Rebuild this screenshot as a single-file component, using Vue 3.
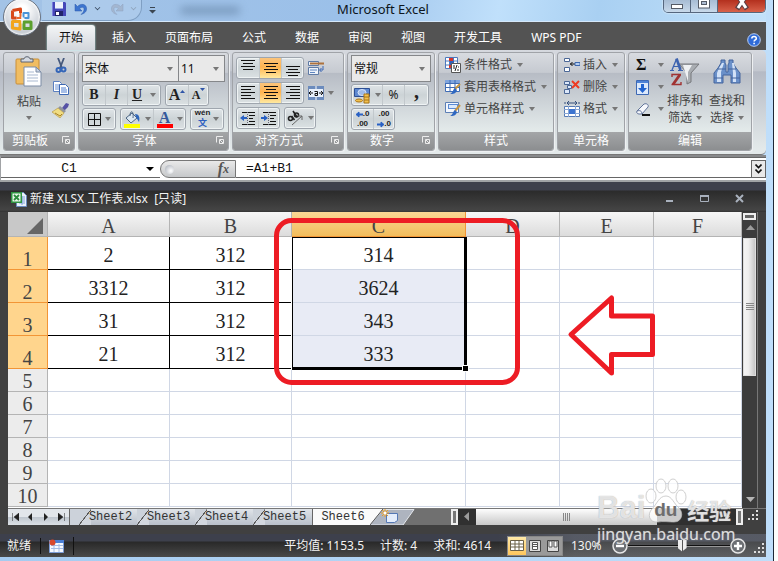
<script setup>
import { ref } from 'vue'

const tabs = ['开始', '插入', '页面布局', '公式', '数据', '审阅', '视图', '开发工具', 'WPS PDF']
const columns = ['A', 'B', 'C', 'D', 'E', 'F']
const rows = [
  ['2', '312', '314'],
  ['3312', '312', '3624'],
  ['31', '312', '343'],
  ['21', '312', '333'],
  [], [], [], [], [], []
]
const sheets = ['Sheet2', 'Sheet3', 'Sheet4', 'Sheet5', 'Sheet6']
const activeSheet = ref('Sheet6')
const zoom = ref(130)
const formula = ref('=A1+B1')
const cellName = ref('C1')
const valign = [[3, 6, 9, 12], [6, 9, 12, 15], [9, 12, 15, 18]]
const halign = ['left', 'center', 'right']
const shortLineX = { left: 1, center: 3, right: 5 }
</script>

<template>
  <div class="desk">
    <div class="window">
      <header class="titlebar">
        <div class="quick">
          <button class="bare" aria-label="保存">
            <svg width="14" height="15" viewBox="0 0 14 15"><path d="M0 1h13l1 1v13H0z" fill="#4547b8" /><path d="M3 1h8v6H3z" fill="#eef2fb" /><path d="M3 7h8v1H3z" fill="#9aa6e0" /><path d="M3 10h8v5H3z" fill="#22256b" /><path d="M4 11h3v3H4z" fill="#fff" /><path d="M0 1h1v14H0z" fill="#7a7ddd" /></svg>
          </button>
          <button class="bare" aria-label="撤消">
            <svg width="14" height="14" viewBox="0 0 14 14"><path d="M1 2v7h7L5.600 6.600C8 4.500 10.500 5 10 8c-.3 2-1.500 3-3 4.500 4-1 6-3.500 5.500-6.500C12 2 7 1 3.500 4.500z" fill="#3c74cf" stroke="#2c5aa8" stroke-width=".5" /></svg>
          </button>
          <i class="chev"></i>
          <button class="bare" aria-label="恢复">
            <svg width="14" height="14" viewBox="0 0 14 14"><path d="M13 2v7H6l2.400-2.400C6 4.500 3.500 5 4 8c.3 2 1.500 3 3 4.500C3 11.500 1 9 1.500 6 2 2 7 1 10.500 4.500z" fill="#a3b6d0" stroke="#8ea3c0" stroke-width=".5" /></svg>
          </button>
          <i class="chev pale"></i>
        </div>
        <button class="bare more" aria-label="自定义快速访问工具栏"><svg width="7" height="7" viewBox="0 0 7 7"><path d="M1 0h5v1H1zM0 3h7L3.500 6.500z" fill="#3b4652" /></svg></button>
        <i class="smudge"></i>
        <h1>Microsoft Excel</h1>
        <div class="winbtns">
          <button aria-label="最小化"><svg width="12" height="10"><rect x=".5" y="4.500" width="11" height="4" fill="#fff" stroke="#555b66" /></svg></button>
          <button aria-label="还原"><svg width="12" height="10"><rect x=".5" y="-3" width="11" height="11" fill="#fff" stroke="#555b66" /><rect x="3.500" y="1.500" width="5" height="3" fill="#aebdd2" stroke="#555b66" /></svg></button>
          <button class="close" aria-label="关闭"><svg width="14" height="11" viewBox="0 0 14 11"><path d="M2 -4l5 5 5-5M2 9l5-7 5 7" fill="none" stroke="#5b4145" stroke-width="5" /><path d="M3 -4l4 6 4-6M3 8l4-6 4 6" fill="none" stroke="#fff" stroke-width="3" /></svg></button>
        </div>
      </header>

      <button class="orb" aria-label="Office 按钮">
        <svg width="24" height="24" viewBox="0 0 24 24">
          <path d="M2.500 3.500l8-1.500v4M2.500 3.500v7.500h4" fill="none" stroke="#d8481a" stroke-width="3" stroke-linejoin="round" />
          <path d="M10.500 6v5h-4" fill="none" stroke="#e8672c" stroke-width="2" />
          <path d="M13.500 10.500V6h5v5h-4" fill="none" stroke="#4a94d8" stroke-width="2" stroke-linejoin="round" />
          <path d="M14 15h7v6.500h-7z" fill="none" stroke="#5ba02e" stroke-width="3" stroke-linejoin="round" />
          <path d="M2.500 14.500h7.500v7.500l-7.500-1z" fill="none" stroke="#f2a51c" stroke-width="3" stroke-linejoin="round" />
          <path d="M11.500 9.500h1v7h-1zM8.500 12h7v1h-7z" fill="#fff" />
        </svg>
      </button>

      <nav class="tabs">
        <button v-for="(t, i) in tabs" :key="t" :class="{ active: i === 0 }">{{ t }}</button>
        <button class="help" aria-label="帮助"><svg width="14" height="14" viewBox="0 0 14 14"><circle cx="7" cy="7" r="6.300" fill="#2f6bd8" stroke="#b9cff5" /><path d="M4.800 5.600C4.800 2.800 9.300 2.900 9.300 5.400 9.300 7 7.200 6.800 7.100 8.500M7.100 9.700v1.500" fill="none" stroke="#fff" stroke-width="1.600" /></svg></button>
      </nav>

      <section class="ribbon">
        <div class="group clip">
          <div class="body">
            <button class="big paste">
              <svg width="28" height="31" viewBox="0 0 28 31"><rect x="1" y="3" width="23" height="25" rx="1" fill="#f0bd62" stroke="#c98f38" /><path d="M6 6V3h3c0-3 6-3 6 0h3v3z" fill="#d5dae2" stroke="#5c6472" /><path d="M9 11h12l5 5v14H9z" fill="#fdfeff" stroke="#7d8da6" /><path d="M21 11v5h5z" fill="#c8d3e4" stroke="#7d8da6" /><path d="M12 16h7M12 19h11M12 22h11M12 25h11" stroke="#a9b9d0" /></svg>
              <span>粘贴</span><i class="caret"></i>
            </button>
            <div class="stack">
              <button class="bare" aria-label="剪切"><svg width="12" height="16" viewBox="0 0 12 16"><path d="M3 0l4 10M9 0L5 10" stroke="#46597c" stroke-width="1.800" /><circle cx="3.500" cy="12" r="2" fill="none" stroke="#3566b8" stroke-width="2" /><circle cx="8.500" cy="11.500" r="2" fill="none" stroke="#3566b8" stroke-width="2" /></svg></button>
              <button class="bare" aria-label="复制"><svg width="16" height="14" viewBox="0 0 16 14"><path d="M.5.500h6l2 2v8h-8z" fill="#fff" stroke="#5b7fc0" /><path d="M2 4h5M2 6h5M2 8h5" stroke="#6c93d6" /><path d="M6.500 3.500h6l3 3v7h-9z" fill="#fff" stroke="#3d68b4" /><path d="M8 7h5M8 9h6M8 11h6" stroke="#4f7fd0" /></svg></button>
              <button class="bare" aria-label="格式刷"><svg width="18" height="15" viewBox="0 0 18 15"><path d="M10 5l4-5 3 1-1 3-4 4z" fill="#5652a5" /><path d="M8 3l6 5-2 2-6-5z" fill="#8f949e" /><path d="M6 5l6 5-4 5-8-6z" fill="#f0dd82" stroke="#b0913a" stroke-width=".6" /><path d="M3 10l5 3 2-2" stroke="#a98127" fill="none" /></svg></button>
            </div>
          </div>
          <footer>剪贴板<svg class="launch" width="8" height="8"><path d="M7 .5H.5v6M3.500 3.500h4v4h-4zM4 4l3 3" fill="none" stroke="#ececec" /></svg></footer>
        </div>

        <div class="group font">
          <div class="body col">
            <div class="line flush">
              <label class="pick wide"><select aria-label="字体"><option>宋体</option></select><i class="caret"></i></label>
              <label class="pick"><select aria-label="字号"><option>11</option></select><i class="caret"></i></label>
            </div>
            <div class="line">
              <div class="set"><button class="glyph b">B</button><button class="glyph i">I</button><button class="glyph u">U<i class="caret"></i></button></div>
              <div class="set"><button class="glyph grow">A<svg width="5" height="11"><path d="M0 3h5L2.500 0z" fill="#2f55a8" /></svg></button><button class="glyph shrink">A<svg width="5" height="14"><path d="M0 0h5L2.500 3z" fill="#2f55a8" /></svg></button></div>
            </div>
            <div class="line">
              <div class="set"><button class="tool w34" aria-label="边框"><svg width="13" height="13"><path d="M.5.500h12v12H.5zM6.500 0v13M0 6.500h13" fill="none" stroke="#111" /></svg><i class="caret"></i></button></div>
              <div class="set">
                <button class="tool w33" aria-label="填充颜色"><svg width="17" height="17" viewBox="0 0 17 17"><path d="M2 7l6-5 5 5-6 5z" fill="#dce8f2" stroke="#4c6583" /><path d="M6 5c0-6 4-6 3 2" fill="none" stroke="#4c6583" /><path d="M11 3c4 0 5 3 4 8l-3-5z" fill="#2e66bc" /><path d="M0 13h16v4H0z" fill="#ff0" /></svg><i class="caret"></i></button>
                <button class="tool w33 fontcolor" aria-label="字体颜色"><span>A</span><i class="caret"></i></button>
              </div>
              <div class="set"><button class="tool w34 wen"><span>wén<b>文</b></span><i class="caret"></i></button></div>
            </div>
          </div>
          <footer>字体<svg class="launch" width="8" height="8"><path d="M7 .5H.5v6M3.500 3.500h4v4h-4zM4 4l3 3" fill="none" stroke="#ececec" /></svg></footer>
        </div>

        <div class="group align">
          <div class="body col loose">
            <div class="line">
              <div class="set"><button v-for="(v, i) in valign" :key="i" class="tool w23" :class="{ on: i === 1 }" :aria-label="['顶端对齐', '垂直居中', '底端对齐'][i]"><svg width="16" height="20"><path v-for="(y, n) in v" :key="n" :d="`M${n % 2 ? 3 : 1} ${y - 0.5}h${n % 2 ? 10 : 14}`" stroke="#111" /></svg></button></div>
              <button class="bare" aria-label="自动换行"><svg width="17" height="16" viewBox="0 0 17 16"><path d="M.5 1.500h10v4H.5zM.5 7.500h10v7H.5z" fill="#eef3fa" stroke="#5f7ba5" /><path d="M2 3.500h14" stroke="#ad723c" stroke-width="2" /><path d="M2 10h7M2 12.500h5" stroke="#5f86c0" /><path d="M15 6v4h-3m1.500-2l-2 2 2 2" fill="none" stroke="#3a66b4" /></svg></button>
            </div>
            <div class="line">
              <div class="set"><button v-for="(s, k) in halign" :key="s" class="tool w23" :class="{ on: k === 1 }" :aria-label="['文本左对齐', '居中', '文本右对齐'][k]"><svg width="16" height="14"><path v-for="n in 5" :key="n" :d="`M${n % 2 ? 1 : shortLineX[s]} ${n * 3 - 2.5}h${n % 2 ? 14 : 10}`" stroke="#111" /></svg></button></div>
              <button class="bare" aria-label="合并后居中"><svg width="16" height="14" viewBox="0 0 16 14"><path d="M.5.500h15v13H.5z" fill="#e8f0fb" stroke="#6f87ae" /><path d="M0 0h16v3H0zM0 11h16v3H0z" fill="#6b8bbd" /><path d="M8 0v3M8 11v3" stroke="#fff" /><path d="M1 7h4M11 7h4M3 5L1 7l2 2M13 5l2 2-2 2" fill="none" stroke="#111" /><path d="M6.500 5.500h3v4h-2.500v-2h2" fill="none" stroke="#111" /></svg></button><i class="caret"></i>
            </div>
            <div class="line">
              <div class="set">
                <button class="tool w22" aria-label="减少缩进量"><svg width="16" height="15" viewBox="0 0 16 15"><path d="M2 1.500h13M9 4.500h6M9 7.500h4M9 10.500h6M2 13.500h13" stroke="#111" /><path d="M7.500 1v14" stroke="#667" stroke-dasharray="1 1" /><path d="M0 7l4-3v2h3v2H4v2z" fill="#2860c4" /></svg></button>
                <button class="tool w22" aria-label="增加缩进量"><svg width="16" height="15" viewBox="0 0 16 15"><path d="M2 1.500h13M9 4.500h6M9 7.500h4M9 10.500h6M2 13.500h13" stroke="#111" /><path d="M7.500 1v14" stroke="#667" stroke-dasharray="1 1" /><path d="M7 7L3 4v2H0v2h3v2z" fill="#2860c4" /></svg></button>
              </div>
              <div class="set"><button class="tool w30" aria-label="方向"><svg width="17" height="16" viewBox="0 0 17 16"><g fill="none" stroke="#222" stroke-width="1.600"><circle cx="3.500" cy="8.500" r="2" /><path d="M4.500 6l3 4M6 1l4 6" /><circle cx="9.500" cy="5" r="2" /></g><path d="M5 15L15 6M11 6h4v4" fill="none" stroke="#666" /></svg><i class="caret"></i></button></div>
            </div>
          </div>
          <footer>对齐方式<svg class="launch" width="8" height="8"><path d="M7 .5H.5v6M3.500 3.500h4v4h-4zM4 4l3 3" fill="none" stroke="#ececec" /></svg></footer>
        </div>

        <div class="group number">
          <div class="body col">
            <div class="line flush"><label class="pick wide"><select aria-label="数字格式"><option>常规</option></select><i class="caret"></i></label></div>
            <div class="line">
              <div class="set">
                <button class="tool w30" aria-label="会计数字格式"><svg width="17" height="17" viewBox="0 0 17 17"><path d="M.5 1.500h15v8H.5z" fill="#5e88d0" stroke="#2d4f94" /><ellipse cx="8" cy="5.500" rx="4" ry="3" fill="#9fbbe9" stroke="#d6e4fa" /><path d="M10 7h5v9h-5z" fill="#f2c14e" stroke="#a87419" /><path d="M10 10h5M10 13h5" stroke="#a87419" /><ellipse cx="5" cy="13.500" rx="3.500" ry="1.500" fill="#f2c14e" stroke="#a87419" /></svg><i class="caret"></i></button>
                <button class="tool pct">%</button><button class="tool comma">,</button>
              </div>
            </div>
            <div class="line">
              <div class="set">
                <button class="tool w22 dec" aria-label="增加小数位数"><span><svg width="7" height="7"><path d="M0 3.500L3 1v2h4v1H3v2z" fill="#2860c4" stroke="#2860c4" /></svg>.0</span><span>.00</span></button>
                <button class="tool w22 dec" aria-label="减少小数位数"><span>.00</span><span><svg width="7" height="7"><path d="M7 3.500L4 1v2H0v1h4v2z" fill="#2860c4" stroke="#2860c4" /></svg>.0</span></button>
              </div>
            </div>
          </div>
          <footer>数字<svg class="launch" width="8" height="8"><path d="M7 .5H.5v6M3.500 3.500h4v4h-4zM4 4l3 3" fill="none" stroke="#ececec" /></svg></footer>
        </div>

        <div class="group styles">
          <div class="body col list">
            <button class="item"><svg width="16" height="16" viewBox="0 0 16 16"><path d="M.5.500h12v11H.5z" fill="#fff" stroke="#4d78bd" /><path d="M4.500 0v12M8.500 0v12M0 4h13M0 8h13" stroke="#4d78bd" /><path d="M4 1h4v3H4zM4 8h3v3H4z" fill="#d8332a" /><path d="M5 4h4v4H5z" fill="#3162b8" /><path d="M6.500 6.500h9v9h-9z" fill="#fff" stroke="#555" /><path d="M8 9h2M12 8l-2 6M12 13h2M8 11h2M13 10h1" stroke="#222" /></svg>条件格式<i class="caret"></i></button>
            <button class="item"><svg width="16" height="16" viewBox="0 0 16 16"><path d="M.5 1.500h14v11H.5z" fill="#fff" stroke="#3f6cb5" /><path d="M0 1h15v3H0z" fill="#7fa4dc" /><path d="M5 1v12M10 1v12M0 4.500h15M0 8.500h15" stroke="#3f6cb5" /><path d="M15 5l-5 5" stroke="#c8963f" stroke-width="2" /><path d="M10 9l2 2c-1 4-4 4-7 4 3-1 3-5 5-6z" fill="#2d67c2" /></svg>套用表格格式<i class="caret"></i></button>
            <button class="item"><svg width="16" height="16" viewBox="0 0 16 16"><path d="M.5 1.500h13v10H.5z" fill="#f3f7fd" stroke="#5c7fb5" /><path d="M3 3h10v5H3z" fill="#5b8bd4" /><path d="M4 4h8v3H4z" fill="#dce9fa" /><path d="M15 4l-5 6" stroke="#c8963f" stroke-width="2" /><path d="M10 9l2 2c-1 4-4 4-7 4 3-1 3-5 5-6z" fill="#2d67c2" /></svg>单元格样式<i class="caret"></i></button>
          </div>
          <footer>样式</footer>
        </div>

        <div class="group cells">
          <div class="body col list">
            <button class="item"><svg width="16" height="14" viewBox="0 0 16 14"><path d="M.5.500h5v3h-5zM.5 9.500h5v4h-5z" fill="#fff" stroke="#4b6796" /><path d="M6 6h5M8.500 4L6.500 6l2 2" stroke="#111" fill="none" /><path d="M11 4.500h5v3h-5z" fill="#b4cdf0" stroke="#3e69ae" /></svg>插入<i class="caret"></i></button>
            <button class="item"><svg width="16" height="14" viewBox="0 0 16 14"><path d="M.5 1.500h5v3h-5zM3.500 5.500h4v3h-4zM.5 9.500h5v4h-5z" fill="#dce8fa" stroke="#4b6796" /><path d="M8 1l7 7M15 1L8 8" stroke="#ee3a22" stroke-width="2" /></svg>删除<i class="caret"></i></button>
            <button class="item"><svg width="16" height="16" viewBox="0 0 16 16"><path d="M1 1v2M15 1v2M3 2h10M5 0L3 2l2 2M11 0l2 2-2 2" stroke="#334e7c" fill="none" /><path d="M.5 5.500h15v10H.5z" fill="#fff" stroke="#567bb4" /><path d="M4.500 5v11M11.500 5v11M0 8.500h16M0 12.500h16" stroke="#89a7d5" /><path d="M5 8h6v5H5z" fill="#3c74d0" /></svg>格式<i class="caret"></i></button>
          </div>
          <footer>单元格</footer>
        </div>

        <div class="group edit">
          <div class="body">
            <div class="minis">
              <button class="item" aria-label="求和"><b>Σ</b><i class="caret"></i></button>
              <button class="item" aria-label="填充"><svg width="13" height="15" viewBox="0 0 13 15"><path d="M.5.500h12v14H.5z" fill="#dce9fb" stroke="#3d68b4" /><path d="M1 1h11v2H1z" fill="#4d82d6" /><path d="M5 4h3v4h3l-4.500 5L2 8h3z" fill="#2264d0" /></svg><i class="caret"></i></button>
              <button class="item" aria-label="清除"><svg width="14" height="13" viewBox="0 0 14 13"><path d="M1 8l7-7c3-1 5 1 4 3l-6 7H3C1 11 0 9 1 8z" fill="#f6f8fc" stroke="#61749a" /><path d="M1 8c3-1 5 0 5 3" fill="none" stroke="#61749a" /><path d="M6 12h8" stroke="#111" stroke-width="2" /></svg><i class="caret"></i></button>
            </div>
            <button class="big two">
              <svg width="30" height="30" viewBox="0 0 30 30"><path d="M9 7h20l-8 9v9l-4 2V16z" fill="#a9adb2" stroke="#77797d" /><path d="M13 8h9l-4 7v10z" fill="#eff1f3" /><path d="M2 13L6.500 2" fill="none" stroke="#3c62b0" stroke-width="1.300" /><path d="M6.500 1.500L10.500 13" fill="none" stroke="#3c62b0" stroke-width="2.600" /><path d="M3.500 9.500h6M0 13.500h4M8 13.500h5" fill="none" stroke="#3c62b0" stroke-width="1.200" /><path d="M2 20v-2.500h9M1.500 27.500H11V25" fill="none" stroke="#a03232" stroke-width="1.400" /><path d="M10 17.500L3 27.500" fill="none" stroke="#a03232" stroke-width="2.800" /></svg>
              <span>排序和</span><span>筛选<i class="caret"></i></span>
            </button>
            <button class="big two">
              <svg width="28" height="30" viewBox="0 0 28 30"><path d="M8 6V3h4v3l1 2v7h2V8l1-2V3h4v3l3 5 4 5v10h-9v-8h-8v8H1V16l4-5z" fill="#6a90c9" stroke="#44659d" /><path d="M6 11l3-5h2l-3 9v10H4v-9zM20 16l-1-10h2l2 10v9h-3z" fill="#d3e2f7" /><path d="M1 21h9M18 21h9M5 12h8M15 12h8" stroke="#44659d" /></svg>
              <span>查找和</span><span>选择<i class="caret"></i></span>
            </button>
          </div>
          <footer>编辑</footer>
        </div>
      </section>

      <section class="formula">
        <label class="namebox"><input v-model="cellName" aria-label="名称框" /><i class="caret black"></i></label>
        <div class="fx"><i class="knob"></i><button class="bare" aria-label="插入函数"><em>f</em><sub>x</sub></button></div>
        <input v-model="formula" class="expr" aria-label="编辑栏" />
        <button class="expand" aria-label="展开编辑栏"><svg width="7" height="10"><path d="M.5.500l3 3 3-3M.5 5.500l3 3 3-3" fill="none" stroke="#111" stroke-width="1.600" /></svg></button>
      </section>

      <div class="booktitle">
        <svg width="16" height="16" viewBox="0 0 16 16"><path d="M5.500 1.500h7l3 3v11h-10z" fill="#eaf1fb" stroke="#6c8cc0" /><path d="M8 6h6M8 8h6M8 10h6M8 12h6M11 5v9" stroke="#82a3d8" /><path d="M0 1h11v11H0z" fill="#2f9442" /><path d="M1.500 2.500h8v8h-8z" fill="#e9f7ea" /><path d="M3 4l5 5M8 4L3 9" stroke="#2c8d3e" stroke-width="1.800" /></svg>
        <h2>新建 XLSX 工作表.xlsx&nbsp; [只读]</h2>
        <button class="bare" aria-label="最小化工作簿"><svg width="9" height="9"><path d="M1 6h7v2H1z" fill="#a9b1bd" /></svg></button>
        <button class="bare" aria-label="还原工作簿"><svg width="9" height="9"><path d="M.5 1.500h8v6h-8z" fill="none" stroke="#a9b1bd" /><path d="M0 1h9v2H0z" fill="#a9b1bd" /></svg></button>
        <button class="bare" aria-label="关闭工作簿"><svg width="9" height="9"><path d="M1 1l7 7M8 1L1 8" stroke="#a9b1bd" stroke-width="2" /></svg></button>
      </div>

      <main class="book">
        <div class="gridrow">
          <div class="gridwrap">
            <table class="grid">
              <colgroup><col class="ch" /><col class="ca" /><col class="ca" /><col class="cc" /><col class="cd" /><col class="cd" /><col /></colgroup>
              <thead><tr><th class="corner"><svg width="16" height="16"><path d="M16 0v16H0z" fill="#666" /></svg></th><th v-for="c in columns" :key="c" scope="col" :class="{ sel: c === 'C' }">{{ c }}</th></tr></thead>
              <tbody>
                <tr v-for="(r, i) in rows" :key="i" :class="{ tall: i < 4 }">
                  <th scope="row">{{ i + 1 }}</th>
                  <td v-for="(c, j) in columns" :key="c" :class="{ boxed: i < 4 && j < 2, shade: j === 2 && i > 0 && i < 4 }">{{ r[j] }}</td>
                </tr>
              </tbody>
            </table>
            <div class="selection"><i></i></div>
            <svg class="marks" width="734" height="296" viewBox="0 0 734 296"><rect x="268.500" y="8.500" width="241" height="162" rx="15" /><path d="M563 122.500L603.500 86v18h41v38.500h-41V161z" /></svg>
          </div>
          <div class="vscroll"><i class="split"></i><svg width="14" height="16"><path d="M3 10h9L7.500 5z" fill="#9b9b9b" /></svg><div class="thumb"><svg width="8" height="8"><path d="M0 .5h8M0 2.500h8M0 4.500h8M0 6.500h8" stroke="#888" /></svg></div><svg class="down" width="14" height="16"><path d="M3 5h9L7.500 10z" fill="#b5b5b5" /></svg></div>
        </div>
        <div class="sheetbar">
          <div class="sheetnav">
            <button class="bare" aria-label="第一张"><svg width="7" height="8"><path d="M.5 0v8M7 0v8L2 4z" stroke="#222" stroke-width=".5" fill="#222" /></svg></button>
            <button class="bare" aria-label="上一张"><svg width="7" height="8"><path d="M5 0v8L1 4z" fill="#222" /></svg></button>
            <button class="bare" aria-label="下一张"><svg width="7" height="8"><path d="M1 0v8l4-4z" fill="#222" /></svg></button>
            <button class="bare" aria-label="最后一张"><svg width="7" height="8"><path d="M6.500 0v8M0 0v8l5-4z" stroke="#222" stroke-width=".5" fill="#222" /></svg></button>
          </div>
          <div class="sheets">
            <button v-for="s in sheets" :key="s" :class="{ active: s === activeSheet }" @click="activeSheet = s">{{ s }}</button>
            <button class="newsheet" aria-label="插入工作表"><svg width="46" height="16" viewBox="0 0 46 16"><path d="M0 0h13L0 16z" fill="#fafafa" /><path d="M0 16L13 .5h31L33 16z" fill="#aeb4bf" stroke="#e4e7ec" /><path d="M0 16L13 0" stroke="#555" /><path d="M16.500 4.500h11v7l-3 2h-8z" fill="#e4edfb" stroke="#5578b5" /><path d="M15 0v8M11 4h8M12 1l6 6M18 1l-6 6" stroke="#f0a020" /><circle cx="15" cy="4" r="1.500" fill="#fff" /></svg></button>
          </div>
          <div class="hscroll"><i class="split"></i><svg width="18" height="14"><path d="M11 3v9L6 7.500z" fill="#9b9b9b" /></svg><div class="thumb"><svg width="8" height="8"><path d="M.5 0v8M2.500 0v8M4.500 0v8M6.500 0v8" stroke="#888" /></svg></div><div class="track"><svg width="8" height="10"><path d="M2 0v9l5-4.500z" fill="#bbb" /></svg></div><i class="split"></i></div>
          <svg class="grip" width="12" height="12"><path d="M8 1h2M4 5h2M8 5h2M0 9h2M4 9h2M8 9h2" stroke="#ddd" stroke-width="2" /></svg>
        </div>
      </main>

      <footer class="status">
        <span class="ready">就绪</span>
        <button class="bare macro" aria-label="录制宏"><svg width="15" height="14" viewBox="0 0 15 14"><path d="M.5 1.500h14v12H.5z" fill="#f4f8ff" stroke="#7b9cd6" /><path d="M1 1h14v3H1z" fill="#4a7fd6" /><path d="M2 6.500h12M2 9.500h12M5 5v8M10 5v8" stroke="#a3bce4" /><circle cx="3.500" cy="3.500" r="3" fill="#d9482b" /></svg></button>
        <span class="sum first">平均值: 1153.5</span><span class="sum">计数: 4</span><span class="sum">求和: 4614</span>
        <div class="views">
          <button class="on" aria-label="普通"><svg width="14" height="11"><path d="M.5.500h13v10H.5zM0 4h14M0 7h14M5 0v11M9 0v11" fill="#fff" stroke="#6b6048" /></svg></button>
          <button aria-label="页面布局"><svg width="12" height="12"><path d="M.5.500h11v11H.5z" fill="#ddd" stroke="#444" /><path d="M3.500 2.500h5v7h-5zM4 4.500h4M4 6.500h4" fill="#fff" stroke="#555" /></svg></button>
          <button aria-label="分页预览"><svg width="12" height="12"><path d="M.5.500h11v11H.5z" fill="#ddd" stroke="#444" /><path d="M2 1h3v6H2zM7 1h3v6H7z" fill="#fff" stroke="#555" /></svg></button>
        </div>
        <span class="pct130">{{ zoom }}%</span>
        <button class="bare" aria-label="缩小"><svg width="16" height="16"><circle cx="8" cy="8" r="7" fill="#6c6f73" stroke="#e6e6e6" stroke-width="1.500" /><path d="M4 8h8" stroke="#fff" stroke-width="2.400" /></svg></button>
        <input v-model="zoom" class="zoom" type="range" min="50" max="200" aria-label="显示比例" />
        <button class="bare" aria-label="放大"><svg width="16" height="16"><circle cx="8" cy="8" r="7" fill="#6c6f73" stroke="#e6e6e6" stroke-width="1.500" /><path d="M4 8h8M8 4v8" stroke="#fff" stroke-width="2.400" /></svg></button>
        <svg class="grip" width="12" height="12"><path d="M8 1h2M4 5h2M8 5h2M0 9h2M4 9h2M8 9h2" stroke="#ddd" stroke-width="2" /></svg>
      </footer>

      <div class="water">
        <div class="logo"><b>Bai</b><span class="paw"><svg width="42" height="46" viewBox="0 0 42 46"><g fill="#fff" fill-opacity=".75" stroke="#bbb" stroke-opacity=".7"><ellipse cx="6" cy="18" rx="5" ry="7" /><ellipse cx="16" cy="8" rx="5" ry="7" /><ellipse cx="28" cy="8" rx="5" ry="7" /><ellipse cx="36" cy="19" rx="5" ry="7" /><path d="M21 18c6 0 8 8 13 12 5 5 3 14-5 14-4 0-12-1-16 0C4 45 2 36 7 31c5-5 7-13 14-13z" /></g></svg><b>du</b></span><b class="cn">经验</b></div>
        <p>jingyan.baidu.com</p>
      </div>
    </div>
  </div>
</template>

<style>
body { margin: 0; background: #fffff5; }
</style>

<style scoped>
* { box-sizing: border-box; }
.desk { min-height: 100vh; padding-right: 4px; display: flex; background: #fdfdfb; font: 12px/16px "Noto Sans", "Noto Sans CJK SC", sans-serif; color: #222; }
.window { flex: 1; min-width: 0; position: relative; display: flex; flex-direction: column; padding-right: 7px; border-right: 1px solid #1d2836; background: linear-gradient(90deg, #a5cbf0, #bfdefa); overflow: hidden; }
button { font: inherit; color: inherit; margin: 0; padding: 0; border: 0; background: none; }
input, select { font: inherit; color: inherit; margin: 0; border: 0; border-radius: 0; outline: 0; }
svg { display: block; flex: none; }
h1, h2, p { margin: 0; font-weight: 400; }
.bare { display: flex; align-items: center; justify-content: center; }

.titlebar { height: 22px; display: flex; align-items: center; padding-left: 42px; position: relative; border-bottom: 1px solid #d5e8fa; background: linear-gradient(100deg, #a3c3e6 0, #9bc0e9 45%, #c0e0fb 65%, #a9d0f2 78%, #c2e1fa 100%); }
.quick { height: 21px; width: 100px; display: flex; align-items: center; gap: 8px; padding: 0 0 3px 10px; border: 1px solid #7f9fc3; border-width: 0 1px 1px 0; border-radius: 0 0 14px 0; background: #b6d2ef88; }
.chev { width: 5px; height: 5px; margin: -3px 2px 0 -1px; border: solid #33445a; border-width: 0 1px 1px 0; transform: rotate(45deg) scale(.8); }
.chev.pale { border-color: #8da0b8; }
.more { margin-left: 7px; }
.smudge { width: 60px; height: 7px; margin-left: 24px; border-radius: 4px; background: #5b7899; filter: blur(4px); opacity: .6; }
.titlebar h1 { position: absolute; left: 0; right: 0; text-align: center; font-size: 13px; line-height: 18px; top: 0; color: #0c1520; }
.winbtns { position: absolute; right: 0; top: 0; display: flex; height: 13px; border: 1px solid #56677e; border-top: 0; border-radius: 0 0 5px 5px; overflow: hidden; box-shadow: 0 0 2px #fff; }
.winbtns button { width: 27px; display: flex; justify-content: center; background: linear-gradient(#a7bcd4, #c8d9ea); border-right: 1px solid #56677e; }
.winbtns .close { width: 47px; border: 0; background: linear-gradient(#b3301e, #d8614a); }

.orb { position: absolute; z-index: 3; left: 3px; top: -2px; width: 38px; height: 38px; border-radius: 50%; display: flex; align-items: center; justify-content: center; border: 1px solid #6d7683; background: radial-gradient(circle at 50% 30%, #fff 15%, #d7dbe1 55%, #aab1ba 100%); box-shadow: inset 0 0 2px 1px #fff; padding-top: 4px; }

.tabs { height: 28px; display: flex; align-items: flex-end; padding-left: 47px; background: #535353; color: #fff; position: relative; }
.tabs button { padding: 0 12px; height: 25px; line-height: 23px; margin-right: 5px; }
.tabs .active { color: #111; background: linear-gradient(#f4f6f7, #d3d6dc); border-radius: 3px 3px 0 0; box-shadow: 0 0 2px #bff; }
.tabs .help { margin: 0 5px 0 auto; padding: 0; height: 20px; }

.ribbon { height: 105px; display: flex; gap: 3px; padding: 2px 0 3px 3px; background: linear-gradient(#d6d9df, #c3c7cf 20%, #b5bac4 21%, #e3e9ea 95%); border-bottom: 1px solid #777; border-radius: 0 5px 5px 0; color: #444; }
.group { display: flex; flex-direction: column; border: 1px solid #a0a3a8; border-radius: 3px; box-shadow: 1px 1px 0 #eef0f2; overflow: hidden; flex: none; background: linear-gradient(#d8dbe0, #c6cad1 20%, #b7bcc5 21%, #e3eaea 80%); }
.group footer { height: 18px; line-height: 17px; text-align: center; color: #fff; background: linear-gradient(#a4a6a8, #8c8e90); position: relative; flex: none; }
.launch { position: absolute; right: 4px; top: 4px; }
.clip { width: 72px; } .font { width: 151px; } .align { width: 112px; } .number { width: 88px; } .styles { width: 116px; } .cells { width: 68px; } .edit { width: 124px; }
.clip footer, .font footer, .align footer, .number footer { padding-right: 18px; }
.body { flex: 1; min-height: 0; display: flex; padding: 2px 3px; }
.body.col { flex-direction: column; gap: 2px; }
.body.loose { padding-top: 4px; gap: 3px; }
.line { display: flex; align-items: center; gap: 4px; height: 22px; }
.line.flush { gap: 0; height: 27px; }
.caret { width: 0; height: 0; flex: none; border: 3px solid transparent; border-top: 4px solid #777; border-bottom: 0; }
.caret.black { border-width: 4px 4px 0; border-top-color: #000; }
.pick { height: 27px; width: 47px; display: flex; align-items: center; padding-right: 5px; border: 1px solid #85878a; background: #e9e9e9; color: #111; }
.pick.wide { flex: 1; }
.pick + .pick { margin-left: -1px; }
.pick select { flex: 1; min-width: 0; appearance: none; background: none; padding: 0 0 0 2px; }
.set { height: 22px; display: flex; border: 1px solid #9fa6ae; border-radius: 3px; background: linear-gradient(#dfe4e7, #ccd3d6 50%, #dbe1e3); box-shadow: inset 0 0 0 1px #eff3f4; }
.set button + button { border-left: 1px solid #c2c8cc; }
.tool { display: flex; align-items: center; justify-content: center; gap: 4px; }
.w22 { width: 21px; } .w23 { width: 22px; } .w30 { width: 30px; } .w33 { width: 32px; } .w34 { width: 32px; }
.on { background: linear-gradient(#fbc47c, #ffb450 45%, #ffe9a0); }
.glyph { font-family: "Liberation Serif", serif; font-weight: 700; font-size: 14px; width: 22px; color: #222; display: flex; align-items: center; justify-content: center; gap: 3px; }
.glyph.i { font-style: italic; }
.glyph.u { width: 33px; text-decoration: underline; gap: 8px; }
.glyph.grow { font-size: 16px; gap: 0; width: 22px; } .glyph.shrink { font-size: 12px; gap: 0; width: 20px; }
.fontcolor span { width: 16px; height: 17px; border-bottom: 4px solid #f00; font: 700 16px/13px "Liberation Serif", serif; color: #35599c; }
.wen span { font: 700 8px/8px "Liberation Sans", sans-serif; display: flex; flex-direction: column; align-items: center; color: #222; }
.wen b { font: 700 9px/12px "Noto Sans CJK SC", sans-serif; color: #2d5ec0; }
.wen { gap: 3px; }
.pct { width: 22px; font-size: 12px; color: #222; } .comma { width: 24px; font: 700 20px/10px "Liberation Serif", serif; padding-bottom: 8px; color: #222; }
.dec { flex-direction: column; gap: 0; font: 700 8px/10px "Liberation Sans", sans-serif; color: #222; }
.dec span { display: flex; align-items: center; }
.big { display: flex; flex-direction: column; align-items: center; }
.paste { width: 44px; padding-top: 1px; } .paste span { margin: 7px 0 6px; }
.stack { display: flex; flex-direction: column; }
.stack .bare { width: 20px; height: 22px; }
.body.list { padding: 1px 6px; gap: 0; }
.item { display: flex; align-items: center; gap: 3px; height: 22px; white-space: nowrap; }
.item .caret { margin-left: 2px; }
.minis { width: 32px; flex: none; padding: 0 0 0 4px; display: flex; flex-direction: column; margin-top: -1px; }
.minis .item { width: 28px; justify-content: space-between; }
.minis b { font: 700 16px/20px "Liberation Serif", serif; color: #111; }
.two { width: 42px; padding-top: 2px; line-height: 17px; }
.two svg { margin-bottom: 5px; }
.two span { display: flex; align-items: center; gap: 4px; }

.formula { height: 27px; display: flex; align-items: stretch; background: linear-gradient(#666 0 1px, #fff 1px); padding: 3px 0 2px; border: solid #a1a3a6; border-width: 0 0 2px 1px; border-top: 2px solid #88898b; color: #111; }
.formula > * { border-bottom: 1px solid #666; }
.namebox { width: 159px; display: flex; align-items: center; padding-right: 6px; }
.namebox input { flex: 1; min-width: 0; text-align: center; background: none; padding: 0 9px 0 0; font: 13px/18px "Liberation Mono", monospace; }
.fx { width: 76px; display: flex; align-items: center; justify-content: space-between; padding: 0 6px 0 4px; border: 1px solid #777; border-radius: 12px 0 0 12px; background: linear-gradient(#e9e9e9, #c6c8ca); }
.knob { width: 9px; height: 9px; border-radius: 50%; background: radial-gradient(circle at 65% 65%, #fff, #a5abb5); }
.fx .bare { font: italic 700 16px/18px "Liberation Serif", serif; color: #555; }
.fx sub { font-size: 12px; line-height: 8px; vertical-align: 0; }
.expr { flex: 1; min-width: 0; padding: 0 10px; font: 13px/18px "Liberation Mono", monospace; background: #fff; }
.expand { width: 15px; display: flex; align-items: center; justify-content: center; border: 1px solid #666; background: #e9e9e9; }

.booktitle { height: 30px; display: flex; align-items: center; gap: 26px; padding: 3px 22px 0 11px; background: linear-gradient(#3e404c 0 8px, #2b2b2b 9px, #444 28px, #333); color: #f2f2f2; }
.booktitle h2 { flex: 1; font-size: 12px; margin-left: -23px; }

.book { background: #404040; padding-left: 8px; }
.gridrow { display: flex; padding-right: 8px; }
.gridwrap { flex: 1; min-width: 0; position: relative; overflow: hidden; height: 296px; background: #fff; }
.grid { width: 100%; table-layout: fixed; border-collapse: separate; border-spacing: 0; font: 20px/20px "Liberation Serif", "Noto Sans CJK SC", serif; color: #222; }
.ch { width: 40px; } .ca { width: 122px; } .cc { width: 174px; } .cd { width: 94px; }
.grid th, .grid td { padding: 0; height: 23px; font-weight: 400; text-align: center; border: solid #d0d7e5; border-width: 0 1px 1px 0; }
.grid thead th { height: 25px; padding-top: 3px; background: linear-gradient(#f6f6f6, #dcdcdc); border-color: #b4b4b4; color: #444; }
.grid thead .sel { background: linear-gradient(#fad694, #f2bd5c); border-color: #f29536; }
.grid .corner { background: #c8c8c8; padding: 4px 0 0 19px; }
.grid tbody th { background: #ececec; border-color: #b4b4b4; color: #444; padding-top: 2px; }
.grid .tall td { height: 33px; padding-top: 3px; }
.grid .tall th { height: 33px; padding-top: 12px; background: #ffd58d; border-color: #f29536; }
.grid .boxed { border-color: #000; }
.grid .shade { background: #e8ebf5; }
.selection { position: absolute; left: 284px; top: 25px; width: 175px; height: 133px; border: solid #000; border-width: 1px 3px 3px 1px; box-shadow: -1px 0 0 #fff; }
.selection i { position: absolute; right: -5px; bottom: -5px; width: 7px; height: 7px; background: #000; border: 1px solid #fff; }
.marks { position: absolute; left: 0; top: 0; }
.marks * { fill: none; stroke: #ed1c24; stroke-width: 5px; stroke-linejoin: round; }
.vscroll { width: 16px; display: flex; flex-direction: column; padding: 1px 1px 0; background: #3c3c3c; border-right: 1px solid #777; }
.vscroll .split { height: 7px; border: 2px solid #eee; background: #666; flex: none; }
.vscroll .thumb { height: 138px; margin-top: 2px; display: flex; align-items: center; justify-content: center; background: linear-gradient(90deg, #f4f4f4, #eee 40%, #c5c5c5); border: 1px solid #ddd; }
.vscroll .down { margin-top: auto; }

.sheetbar { display: flex; height: 17px; padding-right: 6px; color: #333; background: #404040; border-top: 1px solid #777; }
.sheetnav { width: 62px; display: flex; align-items: center; justify-content: space-around; background: linear-gradient(#e2e6eb 50%, #bfc6cf 51%, #dbe0e5); border-right: 1px solid #666; }
.sheets { flex: 1; min-width: 0; display: flex; background: linear-gradient(90deg, #ccd2da 255px, #707070 300px); padding-left: 10px; }
.sheets button { position: relative; width: 58px; padding-left: 3px; font: 12px/16px "Liberation Mono", monospace; background: linear-gradient(#e0e4e9, #b9c0ca); z-index: 0; text-align: center; }
.sheets button:not(.newsheet, .active)::before { content: ""; position: absolute; z-index: -1; left: -1px; bottom: 0; width: 12px; height: 16px; background: linear-gradient(128deg, #ccd2da 48%, #555 49% 53%, #d2d7de 54%); }
.sheets .active { background: #fafafa; border-left: 1px solid #666; }
.sheets .newsheet { padding: 0; width: 46px; background: none; }
.hscroll { width: 292px; display: flex; background: #303030; align-items: stretch; }
.hscroll .split { width: 7px; border: 2px solid #eee; background: #777; }
.hscroll .thumb { width: 181px; display: flex; align-items: center; justify-content: center; background: linear-gradient(#fdfdfd, #ddd 60%, #c8c8c8); }
.hscroll .track { flex: 1; display: flex; align-items: center; justify-content: flex-end; padding-right: 5px; }
.sheetbar .grip { margin: 1px 0 0 5px; }

.status { flex: 1 0 32px; margin-bottom: 4px; min-height: 32px; display: flex; align-items: center; color: #f4f4f4; padding: 9px 0 0 7px; background: linear-gradient(#404040 0 9px, transparent 9px), linear-gradient(90deg, transparent 65%, #8a8f9655 75%), linear-gradient(#3d404c 10px 16px, #292929 17px, #494949 100%); position: relative; }
.ready { padding-right: 9px; border-right: 1px solid #111; }
.macro { margin-left: 8px; padding-right: 9px; border-right: 1px solid #111; height: 18px; }
.sum { margin-right: 16px; white-space: nowrap; }
.sum.first { margin-left: auto; }
.views { display: flex; height: 20px; border: 1px solid #888; background: #9a9a9a; margin-right: 8px; }
.views button { width: 18px; display: flex; align-items: center; justify-content: center; }
.views .on { background: linear-gradient(#ffe9a8, #ffc65c); }
.pct130 { width: 41px; }
.zoom { width: 102px; height: 16px; appearance: none; background: linear-gradient(transparent 7px, #111 7px 8px, #999 8px 9px, transparent 9px); }
.zoom::-webkit-slider-thumb { appearance: none; width: 9px; height: 12px; background: linear-gradient(90deg, #eee 4px, #555 4px 5px, #eee 5px); clip-path: polygon(0 0, 100% 0, 100% 70%, 50% 100%, 0 70%); }
.status .grip { margin: 6px 0 0 8px; }

.water { position: absolute; z-index: 5; right: 38px; bottom: 17px; width: 138px; color: #ffffffb8; pointer-events: none; text-shadow: 0 0 1px #999; }
.logo { display: flex; align-items: flex-end; height: 46px; }
.logo b { font: 700 31px/32px "Liberation Sans", sans-serif; }
.paw { position: relative; width: 42px; height: 46px; flex: none; }
.paw b { position: absolute; left: 9px; bottom: 4px; font-size: 19px; line-height: 20px; color: #6e6e6e; text-shadow: none; }
.logo .cn { font: 700 22px/30px "Noto Sans CJK SC", sans-serif; white-space: nowrap; }
.water p { font: 16px/20px "Noto Sans", sans-serif; white-space: nowrap; }
</style>
